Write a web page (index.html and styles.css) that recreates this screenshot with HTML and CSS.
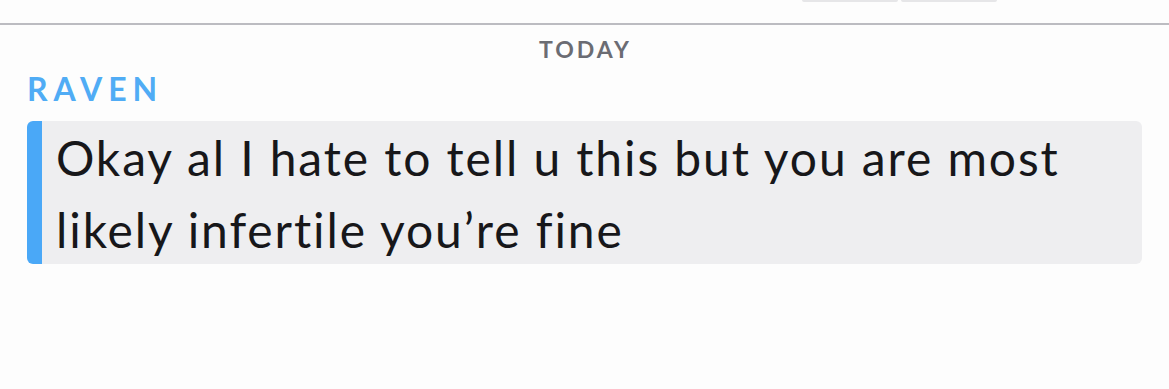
FILE: index.html
```html
<!DOCTYPE html>
<html>
<head>
<meta charset="utf-8">
<link rel="stylesheet" href="styles.css">
</head>
<body>
<div class="topbar">
  <div class="topbar-ghost"><span></span><span></span></div>
</div>
<main class="chat">
  <div class="day">TODAY</div>
  <div class="sender">RAVEN</div>
  <div class="bubble">
    <p class="msg">Okay al I hate to tell u this but you are most likely infertile you’re fine</p>
  </div>
</main>
</body>
</html>
```
FILE: styles.css
```css
* { box-sizing: border-box; }
html, body { margin: 0; padding: 0; }
body {
  background: #fdfdfd;
  font-family: "Lato", "Noto Sans", sans-serif;
  width: 1169px;
  height: 389px;
  overflow: hidden;
}
.topbar {
  height: 25px;
  border-bottom: 2px solid #bcbcc1;
  display: flex;
  justify-content: flex-end;
  padding-right: 172px;
}
.topbar-ghost {
  display: flex;
  gap: 3px;
  height: 3px;
}
.topbar-ghost span {
  width: 96px;
  height: 2px;
  background: #e6e6e8;
  border-radius: 0 0 2px 2px;
}
.chat {
  padding: 0 27px;
}
.day {
  text-align: center;
  color: #6b6c73;
  font-size: 23px;
  font-weight: 700;
  line-height: 26px;
  margin-top: 11px;
  letter-spacing: 3px;
  padding-left: 2px;
}
.sender {
  color: #50acf5;
  font-size: 32px;
  font-weight: 700;
  letter-spacing: 6px;
  line-height: 36px;
  margin-top: 9px;
}
.bubble {
  margin-top: 14px;
  width: 1115px;
  height: 143px;
  background: #eeeef0;
  border-left: 15px solid #4aa8f7;
  border-radius: 6px;
  padding: 0 14px;
  display: flex;
  align-items: center;
}
.msg {
  margin: 0;
  color: #17171a;
  font-size: 48px;
  line-height: 72px;
  font-weight: 400;
  letter-spacing: 1.9px;
  padding-top: 2px;
}
```
